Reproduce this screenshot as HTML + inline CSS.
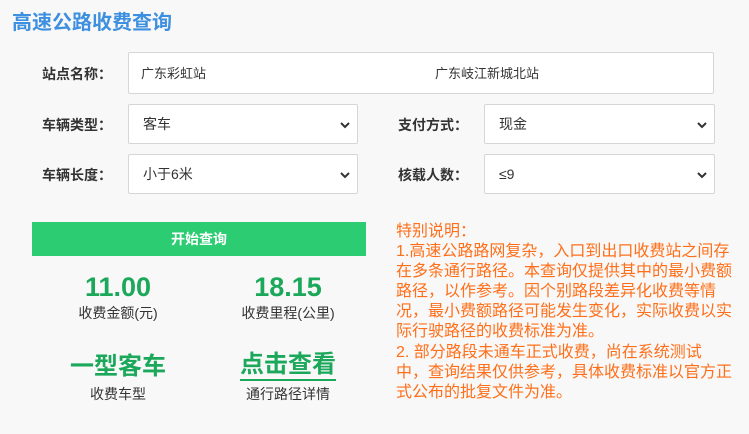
<!DOCTYPE html>
<html><head><meta charset="utf-8"><style>
body{margin:0;width:749px;height:434px;background:#f8f8f8;font-family:"Liberation Sans","Noto Sans CJK SC",sans-serif;position:relative;overflow:hidden;color:#333}
.a{position:absolute}
.t{left:12px;top:6px;font-size:20px;font-weight:bold;color:#3d8fdf}
.l{font-size:14px;font-weight:bold;color:#333}
.box{background:#fff;border:1px solid #d6d6d6;border-radius:2px;font-size:14px;color:#333;box-sizing:border-box}
.sel{height:40px;line-height:38px;padding-left:14px}
.sel svg{position:absolute;right:6px;top:15px}
.btn{left:32px;top:222px;width:334px;height:34px;background:#2ccc72;color:#fff;font-weight:bold;font-size:14px;text-align:center;line-height:34px}
.num{font-size:27px;font-weight:bold;color:#1ca85b;text-align:center;width:170px;line-height:30px}
.cap{font-size:14px;color:#333;text-align:center;width:170px}
.note{left:396px;top:222px;font-size:16px;line-height:20.1px;color:#ff6f1a;white-space:nowrap}
</style></head><body>
<div class="a t">高速公路收费查询</div>
<div class="a l" style="left:42px;top:64px">站点名称：</div>
<div class="a l" style="left:42px;top:115px">车辆类型：</div>
<div class="a l" style="left:42px;top:165px">车辆长度：</div>
<div class="a l" style="left:398px;top:115px">支付方式：</div>
<div class="a l" style="left:398px;top:165px">核载人数：</div>
<div class="a box" style="left:128px;top:52px;width:586px;height:42px;font-size:13px;line-height:42px;padding-left:12px">广东彩虹站<span style="position:absolute;left:306px">广东岐江新城北站</span></div>
<div class="a box sel" style="left:128px;top:104px;width:230px">客车<svg width="12" height="10" viewBox="0 0 12 10"><path d="M2 3l4 4 4-4" stroke="#333" stroke-width="2" fill="none"/></svg></div>
<div class="a box sel" style="left:128px;top:154px;width:230px">小于6米<svg width="12" height="10" viewBox="0 0 12 10"><path d="M2 3l4 4 4-4" stroke="#333" stroke-width="2" fill="none"/></svg></div>
<div class="a box sel" style="left:484px;top:104px;width:231px">现金<svg width="12" height="10" viewBox="0 0 12 10"><path d="M2 3l4 4 4-4" stroke="#333" stroke-width="2" fill="none"/></svg></div>
<div class="a box sel" style="left:484px;top:154px;width:231px">≤9<svg width="12" height="10" viewBox="0 0 12 10"><path d="M2 3l4 4 4-4" stroke="#333" stroke-width="2" fill="none"/></svg></div>
<div class="a btn">开始查询</div>
<div class="a num" style="left:33px;top:272px">11.00</div>
<div class="a cap" style="left:33px;top:303px">收费金额(元)</div>
<div class="a num" style="left:203px;top:272px">18.15</div>
<div class="a cap" style="left:203px;top:303px">收费里程(公里)</div>
<div class="a num" style="left:33px;top:352px;font-size:24px">一型客车</div>
<div class="a cap" style="left:33px;top:384px">收费车型</div>
<div class="a num" style="left:203px;top:350px;font-size:24px"><span style="border-bottom:2px solid #1ca85b;display:inline-block;line-height:29px">点击查看</span></div>
<div class="a cap" style="left:203px;top:384px">通行路径详情</div>
<div class="a note">特别说明：<br>1.高速公路路网复杂，入口到出口收费站之间存<br>在多条通行路径。本查询仅提供其中的最小费额<br>路径，以作参考。因个别路段差异化收费等情<br>况，最小费额路径可能发生变化，实际收费以实<br>际行驶路径的收费标准为准。<br>2. 部分路段未通车正式收费，尚在系统测试<br>中，查询结果仅供参考，具体收费标准以官方正<br>式公布的批复文件为准。</div>
</body></html>
